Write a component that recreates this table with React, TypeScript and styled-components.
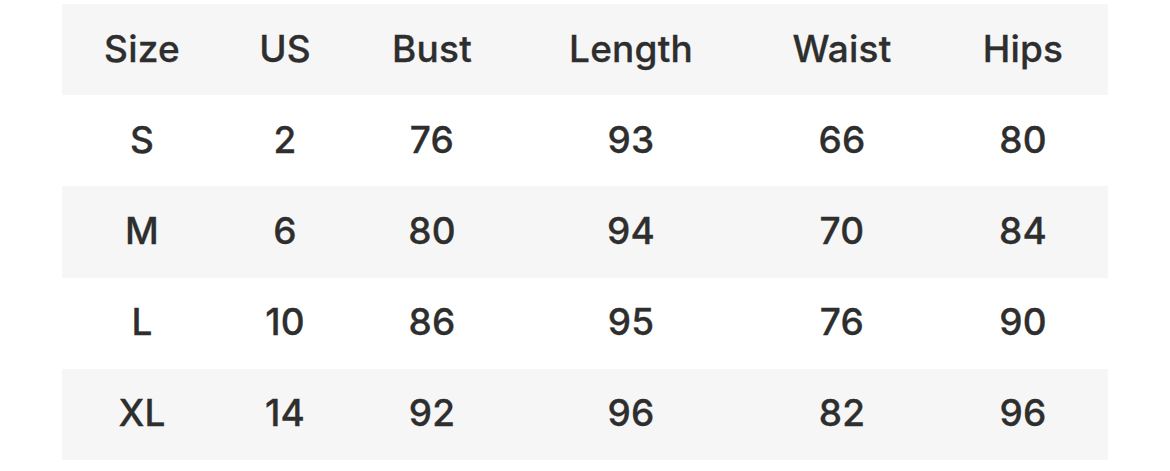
import React from 'react';
import styled, { createGlobalStyle } from 'styled-components';

const GlobalStyle = createGlobalStyle`
  html, body {
    margin: 0;
    padding: 0;
    background: #ffffff;
  }
  body {
    font-family: Inter, 'Liberation Sans', Arial, sans-serif;
  }
`;

const Page = styled.div`
  width: 1170px;
  height: 471px;
  padding: 4px 62px 0 62px;
  box-sizing: border-box;
`;

const Table = styled.div`
  display: grid;
  grid-template-columns: 160px 126px 168px 230px 192px 170px;
  width: 1046px;
`;

const Row = styled.div<{ $shaded: boolean }>`
  display: contents;

  & > div {
    background: ${(p) => (p.$shaded ? '#f6f6f6' : '#ffffff')};
  }
`;

const Cell = styled.div`
  height: 91.2px;
  box-sizing: border-box;
  padding-bottom: 3px;
  display: flex;
  align-items: center;
  justify-content: center;
  font-size: 37px;
  font-weight: 500;
  color: #2e2e2e;
  letter-spacing: 0.2px;
  -webkit-text-stroke: 0.3px #2e2e2e;
`;

const header = ['Size', 'US', 'Bust', 'Length', 'Waist', 'Hips'];

const rows = [
  ['S', '2', '76', '93', '66', '80'],
  ['M', '6', '80', '94', '70', '84'],
  ['L', '10', '86', '95', '76', '90'],
  ['XL', '14', '92', '96', '82', '96'],
];

export default function App() {
  return (
    <Page>
      <GlobalStyle />
      <Table>
        <Row $shaded>
          {header.map((h) => (
            <Cell key={h}>{h}</Cell>
          ))}
        </Row>
        {rows.map((r, i) => (
          <Row key={r[0]} $shaded={i % 2 === 1}>
            {r.map((v, j) => (
              <Cell key={j}>{v}</Cell>
            ))}
          </Row>
        ))}
      </Table>
    </Page>
  );
}
